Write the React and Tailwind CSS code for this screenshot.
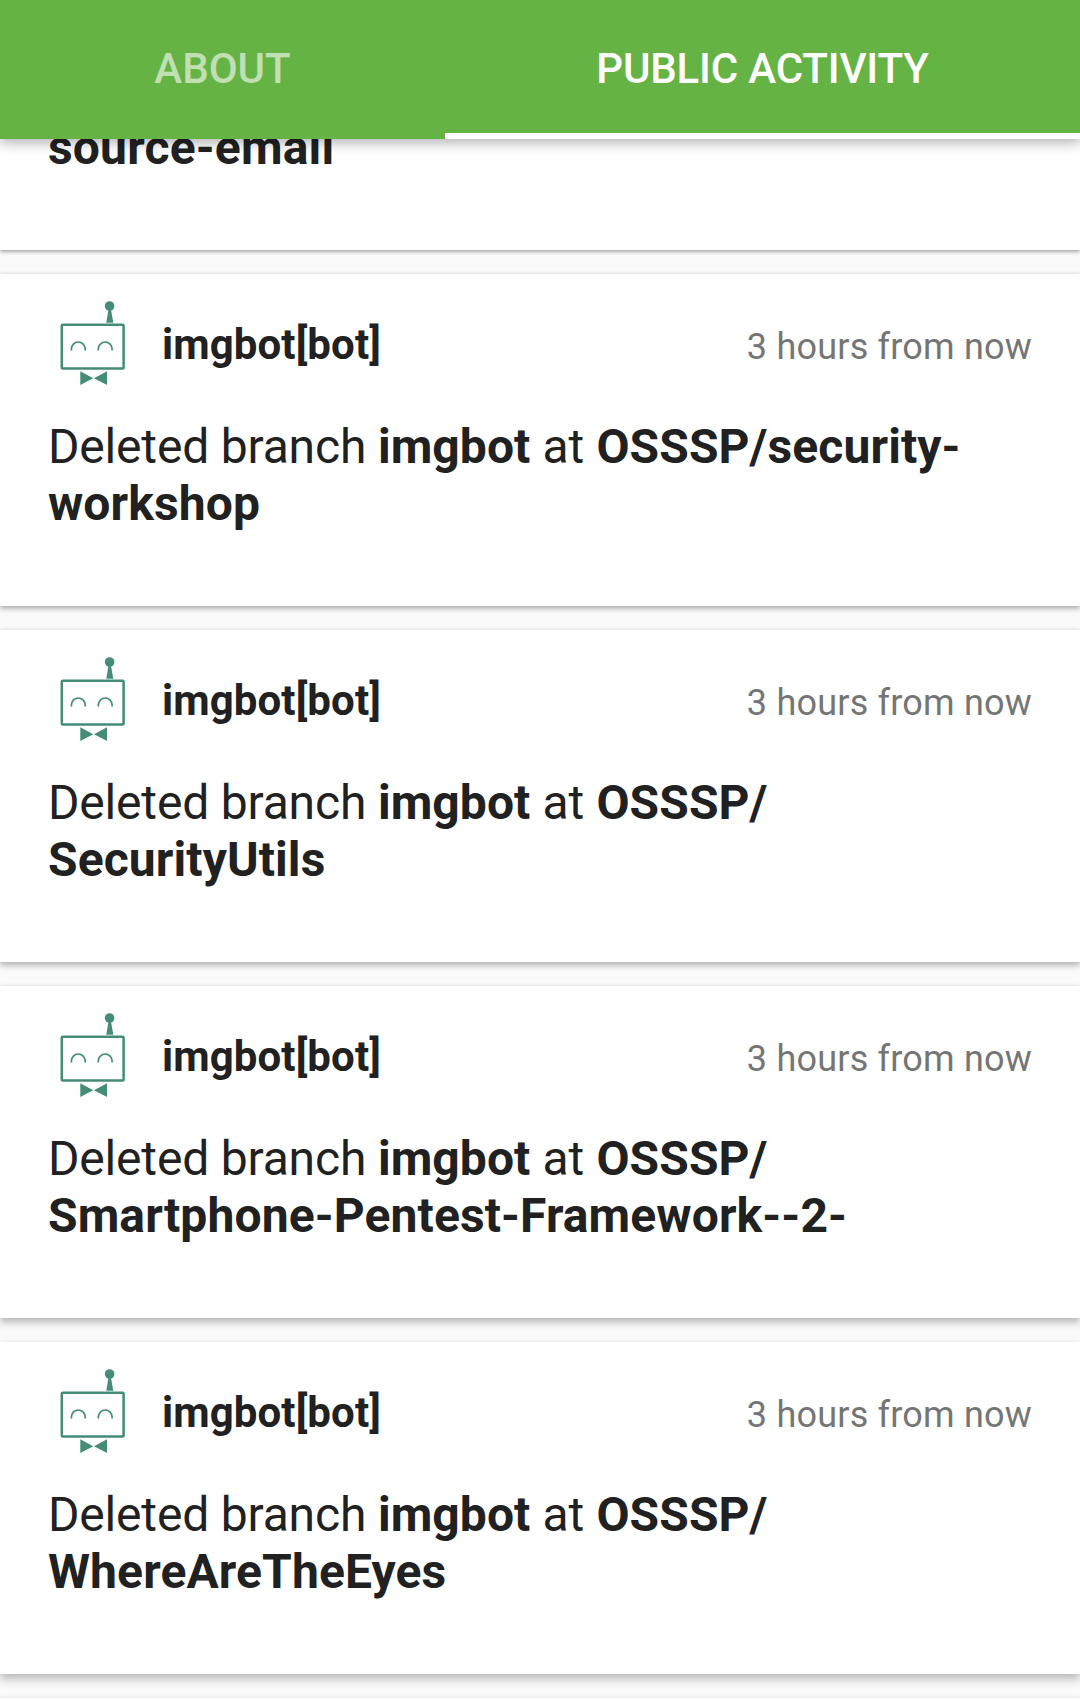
import React from "react";

function BotAvatar() {
  return (
    <svg className="size-[90px] shrink-0" viewBox="48 298 90 90" fill="none" aria-hidden="true">
      <rect x="61.8" y="324.8" width="61.8" height="43.8" rx="1" stroke="#438c78" strokeWidth="2.5" />
      <circle cx="109.6" cy="306" r="4.8" fill="#438c78" />
      <path d="M108.4 310h2.6l2.3 12.8h-7z" fill="#438c78" />
      <path d="M71.4 350.4v-1.4a6.9 7 0 0 1 13.8 0v1.4M98.3 350.4v-1.4a6.9 7 0 0 1 13.8 0v1.4" stroke="#438c78" strokeWidth="1.7" />
      <path d="M80.3 371.3L93.2 378.2L80.3 385zM107 371.3L94 378.2L107 385z" fill="#438c78" />
    </svg>
  );
}

const events = [
  { repo: ["OSSSP/security-", "workshop"], shadow: "shadow-[0_3px_5px_rgba(0,0,0,0.25),0_0_4px_rgba(0,0,0,0.16)]" },
  { repo: ["OSSSP/", "SecurityUtils"], shadow: "shadow-[0_4px_6px_rgba(0,0,0,0.24),0_0_4px_rgba(0,0,0,0.12)]" },
  { repo: ["OSSSP/", "Smartphone-Pentest-Framework--2-"], shadow: "shadow-[0_5px_7px_rgba(0,0,0,0.23),0_0_4px_rgba(0,0,0,0.1)]" },
  { repo: ["OSSSP/", "WhereAreTheEyes"], shadow: "shadow-[0_6px_8px_rgba(0,0,0,0.22),0_0_4px_rgba(0,0,0,0.08)]" },
];

function EventCard({ repo, shadow }) {
  return (
    <article className={`h-[332px] shrink-0 bg-white px-12 pt-6 ${shadow}`}>
      <div className="flex h-[90px] items-center">
        <BotAvatar />
        <span className="ml-6 pt-1 text-[42px] leading-[50px] font-bold tracking-[0.1px]">imgbot[bot]</span>
        <span className="ml-auto pt-2 text-[36px] leading-[42px] tracking-[0.2px] text-[#757575]">3 hours from now</span>
      </div>
      <p className="mt-[30px] text-[48px] leading-[57px] tracking-[-0.18px] whitespace-nowrap">
        Deleted branch <b className="font-bold tracking-[0.08px]">imgbot</b>
        <span className="tracking-[0.08px]"> at </span>
        <b className="font-bold tracking-[0.11px]">{repo[0]}<br />{repo[1]}</b>
      </p>
    </article>
  );
}

export default function App() {
  return (
    <div className="flex h-[1699px] w-[1080px] flex-col overflow-hidden bg-[#fafafa] font-[Roboto,sans-serif] text-[#212121]">
      <nav className="z-10 flex h-[139px] shrink-0 bg-[#65b345] text-[42px] font-medium text-white shadow-[0_4px_12px_rgba(0,0,0,0.3)]">
        <div className="flex w-[445px] items-center justify-center pb-[2px] text-white/60">ABOUT</div>
        <div className="flex flex-1 items-center justify-center border-b-[6px] border-white pt-1 tracking-[-0.18px]">PUBLIC ACTIVITY</div>
      </nav>
      <main className="flex flex-col gap-6">
        <article className="h-[111px] shrink-0 bg-white px-12 shadow-[0_2px_4px_rgba(0,0,0,0.28),0_0_4px_rgba(0,0,0,0.18)]">
          <p className="-mt-5 text-[48px] leading-[57px] font-bold tracking-[0.18px]">source-email</p>
        </article>
        {events.map((event) => (
          <EventCard key={event.repo[1]} {...event} />
        ))}
        <article className="h-6 shrink-0 bg-white shadow-[0_0_4px_rgba(0,0,0,0.1)]" />
      </main>
    </div>
  );
}
